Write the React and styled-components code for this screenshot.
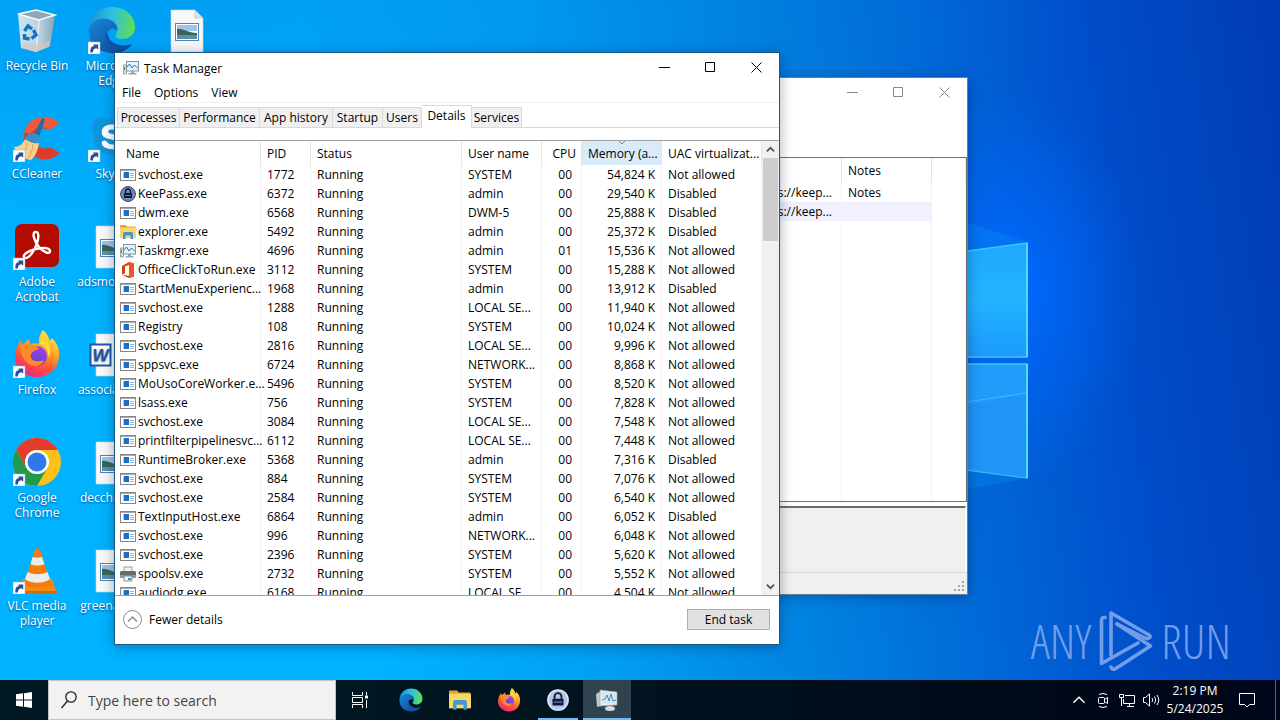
import React from 'react'
import styled, { createGlobalStyle } from 'styled-components'
import { FaSkype } from 'react-icons/fa'

const GlobalStyle = createGlobalStyle`
  * {
    box-sizing: border-box;
  }
  body {
    margin: 0;
    overflow: hidden;
    font-family: "Open Sans", "Noto Sans", sans-serif;
    font-size: 12px;
    line-height: 15px;
    color: #000;
  }
  button, input {
    font: inherit;
    color: inherit;
    border: 0;
    padding: 0;
    background: none;
  }
  svg {
    display: block;
    flex: none;
  }
`

const Screen = styled.div`
  height: 100vh;
  display: flex;
  flex-direction: column;
`

/* ---------- desktop ---------- */

const Desktop = styled.main`
  position: relative;
  flex: 1;
  min-height: 0;
  overflow: hidden;
  background:
    radial-gradient(ellipse 130px 200px at 1010px 290px, #006aff 0%, rgba(0, 102, 250, 0.6) 45%, rgba(0, 90, 230, 0) 100%),
    radial-gradient(ellipse 900px 260px at 200px 0, rgba(0, 130, 225, 0.4) 0%, rgba(0, 130, 225, 0) 100%),
    linear-gradient(83deg, #00b2ff 0%, #00b2ff 28%, #00a0f2 44%, #0082e0 60%, #0064d6 75%, #004eca 85%, #003cb4 100%);
`
const Wallpaper = styled.svg`
  position: absolute;
  left: 830px;
  top: 200px;
`
const IconGrid = styled.div`
  display: grid;
  grid-auto-flow: column;
  grid-template-rows: repeat(6, 108px);
  grid-auto-columns: 74px;
  column-gap: 1px;
`
const Shortcut = styled.a`
  display: flex;
  flex-direction: column;
  align-items: center;
  gap: 4px;
  padding-top: 6px;
  color: #fff;
  text-decoration: none;
  text-align: center;
  text-shadow: 0 1px 2px rgba(0, 30, 80, 0.7);
`
const ShortcutLabel = styled.span`
  max-width: 74px;
  white-space: ${props => props.$single ? 'nowrap' : 'normal'};
`
const Watermark = styled.div`
  position: absolute;
  right: 49px;
  bottom: 8px;
  display: flex;
  align-items: center;
  gap: 7px;
  color: #86aaf0;
  opacity: 0.85;
  font-family: "Open Sans Condensed Light", "Open Sans Condensed", "Roboto Condensed", "Liberation Sans Narrow", Roboto, sans-serif;
  font-size: 48px;
  font-weight: 300;
  line-height: 62px;
`

/* ---------- windows ---------- */

const Window = styled.section`
  position: absolute;
  display: flex;
  flex-direction: column;
  background: #fff;
  border: 1px solid ${props => props.$active ? '#1c5a86' : '#5f7f9c'};
  box-shadow: 0 2px 12px rgba(0, 20, 60, 0.35);
`
const TaskManagerWindow = styled(Window)`
  inset: 52px 500px 35px 114px;
`
const KeePassWindow = styled(Window)`
  inset: 77px 312px 85px 430px;
`
const TitleBar = styled.header`
  flex: none;
  display: flex;
  align-items: center;
  height: 30px;
  padding-left: 8px;
`
const Title = styled.h1`
  margin: 0 0 0 5px;
  flex: 1;
  font-size: 12px;
  font-weight: 400;
`
const WindowButton = styled.button`
  align-self: flex-start;
  width: 46px;
  height: 28px;
  display: grid;
  place-items: center;
  color: ${props => props.$muted ? '#888' : '#000'};
`
const MenuBar = styled.nav`
  flex: none;
  display: flex;
  gap: 13px;
  height: 20px;
  padding-left: 7px;
  border-bottom: 1px solid #f0f0f0;
`
const TabList = styled.div`
  flex: none;
  display: flex;
  align-items: flex-end;
  height: 25px;
  padding-left: 2px;
  border-bottom: 1px solid #d9d9d9;
`
const Tab = styled.button`
  width: ${props => props.$width}px;
  height: ${props => props.$active ? 23 : 20}px;
  margin-bottom: ${props => props.$active ? -1 : 0}px;
  padding-bottom: ${props => props.$active ? 3 : 0}px;
  background: ${props => props.$active ? '#fff' : '#f0f0f0'};
  border: 1px solid #d9d9d9;
  border-bottom: 0;
  & + & {
    border-left: 0;
  }
  white-space: nowrap;
`
const ListArea = styled.div`
  flex: 1;
  min-height: 0;
  display: flex;
  margin-top: 12px;
  border-top: 1px solid #a0a0a0;
  border-bottom: 1px solid #a0a0a0;
`
const TableClip = styled.div`
  flex: 1;
  min-width: 0;
  overflow: hidden;
`
const Table = styled.table`
  width: 100%;
  height: ${props => props.$fill ? '100%' : 'auto'};
  table-layout: fixed;
  border-collapse: separate;
  border-spacing: 0;
`
const Col = styled.col`
  width: ${props => props.$width ? props.$width + 'px' : 'auto'};
`
const Th = styled.th`
  position: relative;
  height: ${props => props.$tall ? 25 : 24}px;
  padding: 0 5px 0 6px;
  font-weight: 400;
  text-align: ${props => props.$align || 'left'};
  white-space: nowrap;
  background: ${props => props.$sorted ? '#d9ebf9' : '#fff'};
  border-right: 1px solid #e5e5e5;
  &:first-child {
    padding-left: 11px;
  }
`
const SortMark = styled.svg`
  position: absolute;
  left: calc(50% - 4px);
  top: 0;
`
const Td = styled.td`
  height: 19px;
  padding: 0 ${props => props.$end || 6}px 0 6px;
  text-align: ${props => props.$align || 'left'};
  white-space: nowrap;
  background: ${props => props.$selected ? '#f0f0ff' : 'transparent'};
  border-right: 1px solid #f2f2f2;
  &:first-child {
    padding-left: 5px;
  }
`
const NameCell = styled.div`
  display: flex;
  align-items: center;
  gap: 2px;
  height: 19px;
`
const ScrollBar = styled.div`
  flex: none;
  width: 17px;
  display: flex;
  flex-direction: column;
  background: #f0f0f0;
`
const ScrollButton = styled.button`
  height: 17px;
  display: grid;
  place-items: center;
`
const ScrollThumb = styled.div`
  height: 83px;
  margin: 0 1px;
  background: #cdcdcd;
`
const ScrollTrack = styled.div`
  flex: 1;
`
const Footer = styled.footer`
  flex: none;
  height: 48px;
  display: flex;
  align-items: center;
  justify-content: space-between;
  padding: 0 9px 2px 8px;
`
const FewerDetails = styled.button`
  display: flex;
  align-items: center;
  gap: 7px;
`
const EndTask = styled.button`
  width: 83px;
  height: 21px;
  background: #e1e1e1;
  border: 1px solid #adadad;
`
const ToolSpace = styled.div`
  flex: none;
  height: 49px;
`
const EntryList = styled.div`
  flex: 1;
  min-height: 0;
  overflow: hidden;
  border: 1px solid #707070;
`
const EntryUrl = styled.span`
  padding-right: 3px;
`
const FillRow = styled.tr`
  height: 100%;
`
const EntryDetails = styled.div`
  flex: none;
  height: 66px;
  margin: 4px 1px 0;
  background: #f0f0f0;
  border-top: 2px solid #6b6b6b;
  border-right: 1px solid #fff;
`
const StatusBar = styled.div`
  flex: none;
  height: 22px;
  display: flex;
  align-items: flex-end;
  justify-content: flex-end;
  padding: 2px;
  background: #f0f0f0;
  border-top: 1px solid #d7d7d7;
`

/* ---------- taskbar ---------- */

const TaskBar = styled.footer`
  position: relative;
  flex: none;
  height: 40px;
  display: flex;
  align-items: stretch;
  background: linear-gradient(90deg, #001a24 0%, #00131f 50%, #000818 85%, #00061a 100%);
  color: #fff;
`
const StartButton = styled.button`
  width: 48px;
  display: grid;
  place-items: center;
`
const SearchBox = styled.label`
  width: 288px;
  display: flex;
  align-items: center;
  gap: 11px;
  padding-left: 12px;
  background: #f2f2f2;
  border: 1px solid #bfc4c6;
  color: #222;
`
const SearchInput = styled.input`
  flex: 1;
  min-width: 0;
  padding-top: 2px;
  font-size: 14px;
  line-height: 20px;
  outline: 0;
  &::placeholder {
    color: #444;
    opacity: 1;
  }
`
const TaskButtons = styled.div`
  display: flex;
  gap: 1px;
`
const TaskButton = styled.button`
  width: 48px;
  display: grid;
  place-items: center;
  &:first-child {
    margin-right: 2px;
  }
  background: ${props => props.$active ? '#2f434e' : 'transparent'};
  background-image: ${props => props.$running ? 'linear-gradient(#76b9ed, #76b9ed)' : 'none'};
  background-repeat: no-repeat;
  background-position: bottom center;
  background-size: ${props => props.$active ? '100%' : '40px'} 2px;
`
const Tray = styled.div`
  margin-left: auto;
  display: flex;
  align-items: center;
`
const TrayButton = styled.button`
  width: 24px;
  height: 40px;
  display: grid;
  place-items: center;
`
const Clock = styled.time`
  width: 64px;
  text-align: center;
  line-height: 18px;
`
const NoticeButton = styled(TrayButton)`
  width: 40px;
`
const ShowDesktop = styled.button`
  width: 5px;
  height: 40px;
  margin-left: 8px;
  border-left: 1px solid #5b6570;
`

/* ---------- drawings ---------- */

const LinkArrow = () => (
  <g>
    <rect x="0" y="36" width="12" height="12" fill="#fff" stroke="#9fb4c8" strokeWidth=".5" />
    <path d="M2.500 46.500c-.6-4 1-6.200 3.600-6.400L5 38.400h5.200v5.400l-1.600-1.500C6.500 42.500 5 43.500 4.800 46.500z" fill="#2b4f92" />
  </g>
)

const Recycle = () => (
  <svg width="48" height="48" viewBox="0 0 48 48">
    <defs>
      <linearGradient id="bin" x1="0" x2="1">
        <stop offset="0" stopColor="#dfeaf1" />
        <stop offset=".6" stopColor="#c9d5dd" />
        <stop offset="1" stopColor="#93a3af" />
      </linearGradient>
    </defs>
    <path d="M5 8l18-4 19 5-5 31-14 6-15-4z" fill="url(#bin)" opacity=".92" />
    <path d="M5 8l18-4 19 5-16 5z" fill="#8fa9b8" stroke="#f4fafd" strokeWidth="1.500" />
    <path d="M26 14l-3 32" stroke="#f6fafc" strokeWidth="1" />
    <path d="M9 36l14 3 14-4-1 6-13 5-14-4z" fill="#d6c8bd" opacity=".7" />
    <g fill="none" stroke="#1474c4" strokeWidth="3.400">
      <path d="M11.500 25l3.500-5 4 3" />
      <path d="M20.500 24l2.500 5-4.500 3.500" />
      <path d="M16.500 33l-5-1v-4" />
    </g>
  </svg>
)

const EdgeIcon = ({ size = 48, link, id }) => (
  <svg width={size} height={size} viewBox="0 0 48 48">
    <defs>
      <linearGradient id={id + 'a'} x1="0" x2="1" y1=".4" y2=".5">
        <stop offset="0" stopColor="#1595dd" />
        <stop offset=".5" stopColor="#2fc2df" />
        <stop offset="1" stopColor="#62dc50" />
      </linearGradient>
      <linearGradient id={id + 'b'} x1="0" x2="1" y1="0" y2="1">
        <stop offset="0" stopColor="#1b86da" />
        <stop offset="1" stopColor="#0d418d" />
      </linearGradient>
    </defs>
    <path d="M1 23C2 9 12 1 24 1c14 0 23 10 23 20 0 8-6 12-13 12-5 0-8-2-6-5 3-4 2-11-5-14C14 11 4 15 1 23z" fill={'url(#' + id + 'a)'} />
    <path d="M1 23c2-8 10-12 19-10 6 2 10 7 9 12-1-2-4-3-6-2-8 3-5 13 3 16 7 3 14 2 18-1-5 7-13 10-21 9C9 46 0 36 1 23z" fill={'url(#' + id + 'b)'} />
    <path d="M19 24c-4 8 0 17 10 19 6 1 11-1 15-5-6 2-13 2-18-1-5-3-7-8-7-13z" fill="#0f54a5" />
    {link && <LinkArrow />}
  </svg>
)

const CCleaner = () => (
  <svg width="48" height="48" viewBox="0 0 48 48">
    <path d="M46 9A21 21 0 1 0 47 39l-10-6a10 10 0 1 1 0-17z" fill="#de3c2b" />
    <path d="M46 9A21 21 0 0 0 11 18l6 2c6-8 13-9 20-4z" fill="#f05a3c" />
    <path d="M29 4l3 1-7 21-6-2z" fill="#1f6ea8" />
    <path d="M13 23c3-5 8-5 14-1l-2 8-13-3z" fill="#3490cc" />
    <path d="M12 25c4 3 9 5 14 4-1 7-4 14-8 17C10 45 3 40 1 33c5 0 9-3 11-8z" fill="#f7cf8e" />
    <path d="M14 29c0 5-3 9-6 12m12-11c0 5-2 10-5 14" stroke="#d9a460" fill="none" />
    <LinkArrow />
  </svg>
)

const Acrobat = () => (
  <svg width="48" height="48" viewBox="0 0 48 48">
    <rect x="2" y="2" width="44" height="43" rx="7" fill="#b30b00" />
    <path d="M22 10c4-1 4 5 2 11-2 7-8 16-12 15-4-2 2-7 11-9 8-2 14-1 14 2 0 4-7 1-11-4-5-6-7-14-4-15z" fill="none" stroke="#fff" strokeWidth="2.400" strokeLinejoin="round" />
    <LinkArrow />
  </svg>
)

const Firefox = ({ size = 48, link, id }) => (
  <svg width={size} height={size} viewBox="0 0 48 48">
    <defs>
      <linearGradient id={id + 'f'} x1=".8" x2=".3" y1="0" y2="1">
        <stop offset="0" stopColor="#fff14f" />
        <stop offset=".35" stopColor="#ffae26" />
        <stop offset=".65" stopColor="#ff5a35" />
        <stop offset="1" stopColor="#f02278" />
      </linearGradient>
      <linearGradient id={id + 'p'} x1=".7" x2=".3" y1="0" y2="1">
        <stop offset="0" stopColor="#a542e8" />
        <stop offset="1" stopColor="#5444cc" />
      </linearGradient>
    </defs>
    <path d="M30 0c4 4 6 7 7 11l2-3c5 5 8 11 7 19-1 12-10 20-22 20S2 38 2 27c0-7 3-13 6-17l1 5 7-6c0 2 1 4 2 5 3-1 6-1 8 0-1-5 1-10 4-14z" fill={'url(#' + id + 'f)'} />
    <circle cx="24" cy="26" r="10" fill={'url(#' + id + 'p)'} />
    <path d="M7 15c3-2 7-2 11 0 3 0 6 1 8 4-3 1-6 2-8 5-1 4 1 6 4 7 4 1 6-1 9 0-3 5-10 7-15 3C10 30 7 23 7 15z" fill="#ff8a28" />
    <path d="M27 14c6 2 9 7 8 14 3-4 3-10 0-14-2-2-4-4-5-7-2 2-3 4-3 7z" fill="#ffdb3a" />
    {link && <LinkArrow />}
  </svg>
)

const Chrome = () => (
  <svg width="48" height="48" viewBox="0 0 48 48">
    <circle cx="24" cy="24" r="24" fill="#fbc116" />
    <path d="M3.200 12A24 24 0 0 1 44.800 12H24a12 12 0 0 0-10.400 18z" fill="#e33b2e" />
    <path d="M3.200 12A24 24 0 0 0 24 48l10.400-18a12 12 0 0 1-20.800 0z" fill="#229a4b" />
    <circle cx="24" cy="24" r="12" fill="#fff" />
    <circle cx="24" cy="24" r="9.500" fill="#2f78ea" />
    <LinkArrow />
  </svg>
)

const Vlc = () => (
  <svg width="48" height="48" viewBox="0 0 48 48">
    <path d="M10 33h29l5 14H5z" fill="#f48a12" />
    <path d="M5 45h39v2H5z" fill="#d56a05" />
    <path d="M22 4c1-2 4-2 5 0l11 34c-4 5-23 5-27 0z" fill="#f57c0c" />
    <path d="M19.500 11c3 1 6 1 9.500 0l2.500 7c-4 2-10 2-14 0z" fill="#ececec" />
    <path d="M14.500 26c6 3 14 3 20 0l2.500 7c-6 5-19 5-25 0z" fill="#ececec" />
    <LinkArrow />
  </svg>
)

const Skype = () => (
  <svg width="48" height="48" viewBox="0 0 48 48">
    <circle cx="24" cy="23" r="15" fill="#fff" />
    <FaSkype x="1" y="0" size={46} color="#1294dc" />
    <LinkArrow />
  </svg>
)

const FileIcon = ({ word }) => (
  <svg width="48" height="48" viewBox="0 0 48 48">
    <path d="M8 4h24l8 8v34H8z" fill="#f8f8f8" stroke="#c9d3da" strokeWidth=".6" />
    <path d="M32 4v8h8z" fill="#dde3e7" stroke="#b3bec6" strokeWidth=".6" />
    {word ? (
      <g>
        <rect x="2.500" y="14.500" width="20" height="21" fill="#fff" stroke="#1c57a8" strokeWidth="2" />
        <text x="12.500" y="31" textAnchor="middle" fontFamily="Liberation Sans, sans-serif" fontSize="17" fontWeight="700" fontStyle="italic" fill="#1c57a8">W</text>
      </g>
    ) : (
      <g>
        <rect x="12.500" y="17.500" width="23" height="17" fill="#fff" stroke="#4a86b8" />
        <path d="M14 19h20v6H14z" fill="#9cc4e6" />
        <path d="M14 23c6-1 10 4 20 4v3H14z" fill="#3b6559" />
        <path d="M14 29h20v4H14z" fill="#5f8da8" />
      </g>
    )}
  </svg>
)

const ExeIcon = () => (
  <svg width="16" height="16" viewBox="0 0 16 16">
    <rect x=".5" y="2.500" width="15" height="11" fill="#fff" stroke="#868686" />
    <path d="M1 3h14v1H1z" fill="#a9a9a9" />
    <rect x="4" y="5" width="5" height="6" fill="#1b6ec2" />
    <path d="M3 5h1v6H3z" fill="#a8d0ee" />
    <path d="M10 6.500h4M10 8.500h4M10 10.500h4" stroke="#8db9dc" />
  </svg>
)

const KeePassIcon = ({ size = 16, light }) => (
  <svg width={size} height={size} viewBox="0 0 16 16">
    <circle cx="8" cy="8" r="7.400" fill={light ? '#b7c5ee' : '#7188bd'} stroke={light ? '#e6ebfa' : '#33415f'} strokeWidth="1" />
    <path d="M5.500 7V5.500a2.500 2.500 0 0 1 5 0V7" fill="none" stroke="#111b38" strokeWidth="1.400" />
    <rect x="4" y="7" width="8" height="5" rx=".5" fill="#111b38" />
    <path d="M5 9.500h6" stroke="#8b9bc8" strokeWidth=".7" />
  </svg>
)

const FolderIcon = ({ size = 16 }) => (
  <svg width={size} height={size} viewBox="0 0 16 16">
    <path d="M0 1h6l1 1.500h8.500V14H0z" fill="#e5a72a" />
    <path d="M0 3.500h16V14H0z" fill="#fcd765" />
    <path d="M3 15V9.500Q3 8 4.500 8h7Q13 8 13 9.500V15h-2.500v-3.500h-5V15z" fill="#3f97d3" />
  </svg>
)

const TaskmgrIcon = ({ size = 16 }) => (
  <svg width={size} height={size} viewBox="0 0 16 16">
    <rect x=".5" y="5" width="3" height="9" fill="#d5d9d9" stroke="#83918d" strokeWidth=".7" />
    <path d="M1.500 7v3" stroke="#3f9a3a" />
    <rect x="3.500" y="1.500" width="12" height="9.500" fill="#e6f3fc" stroke="#8195a3" />
    <path d="M4 7l2.500-3 2.500 4 2.500-3L15 8.500" fill="none" stroke="#1c77ae" />
    <path d="M8 11h3v2h2.500v1.500h-8V13H8z" fill="#9aa5ac" />
  </svg>
)

const TaskmgrBarIcon = () => (
  <svg width="24" height="24" viewBox="0 0 24 24">
    <path d="M1 6l5-3v15l-4 1z" fill="#c3c9cc" />
    <path d="M5 2l17 2v13L5 18z" fill="#e9edef" stroke="#97a2a8" strokeWidth=".7" />
    <path d="M7 4l14 1.500V15L7 16z" fill="#d4e6f2" />
    <path d="M7 12l3-1 2-4 2 6 2-7 2 7 3-1" fill="none" stroke="#4b8db5" />
    <ellipse cx="15" cy="20.500" rx="5" ry="2.500" fill="#d6dadd" />
  </svg>
)

const OfficeIcon = () => (
  <svg width="16" height="16" viewBox="0 0 16 16">
    <path d="M2 4l7-4 5 1.500v13L9 16l-7-3 7 .800V3L5 4.200v7L2 12.800z" fill="#dc3b10" />
    <path d="M9 0l5 1.500v13L9 16z" fill="#ef5424" />
  </svg>
)

const PrinterIcon = () => (
  <svg width="16" height="16" viewBox="0 0 16 16">
    <path d="M4 1h8v5H4z" fill="#f4f4f4" stroke="#868686" strokeWidth=".8" />
    <path d="M1 5h14l1 1v5H0V6z" fill="#686c6e" />
    <path d="M0 9h16v3H0z" fill="#94989a" />
    <path d="M4 10h8v5H4z" fill="#f3f8fa" stroke="#777" strokeWidth=".8" />
    <path d="M8 12h3v2H8z" fill="#2795a5" />
  </svg>
)

const Minimize = () => <svg width="11" height="11" viewBox="0 0 11 11"><path d="M0 5.500h11" stroke="currentColor" /></svg>
const Maximize = () => <svg width="11" height="11" viewBox="0 0 11 11"><path d="M.5.5h9v9h-9z" fill="none" stroke="currentColor" /></svg>
const Close = () => <svg width="11" height="11" viewBox="0 0 11 11"><path d="M.5.5l10 10M10.500.5l-10 10" stroke="currentColor" /></svg>

const Chevron = ({ down, size = 9, width = 2, color = '#505050' }) => (
  <svg width={size} height={size} viewBox="0 0 10 10">
    <path d={down ? 'M1 3l4 4 4-4' : 'M1 7l4-4 4 4'} fill="none" stroke={color} strokeWidth={width} />
  </svg>
)

const AnyRunMark = () => (
  <svg width="56" height="62" viewBox="0 0 56 62" fill="none" stroke="currentColor" strokeWidth="3.600" strokeLinejoin="round" strokeLinecap="round">
    <path d="M7 7.500Q3.500 7 3.500 11v42.500L40 33" />
    <path d="M13 45V3l38 22q3 2-1 3.500h-2L19 14" />
    <path d="M19 14l33.500 22L17 59q-3 1-4-2" />
  </svg>
)

const icons = {
  exe: <ExeIcon />,
  keepass: <KeePassIcon />,
  folder: <FolderIcon />,
  taskmgr: <TaskmgrIcon />,
  office: <OfficeIcon />,
  printer: <PrinterIcon />,
}

/* ---------- data ---------- */

const shortcuts = [
  { label: 'Recycle Bin', icon: <Recycle /> },
  { label: 'CCleaner', icon: <CCleaner /> },
  { label: 'Adobe Acrobat', icon: <Acrobat /> },
  { label: 'Firefox', icon: <Firefox link id="ffd" /> },
  { label: 'Google Chrome', icon: <Chrome /> },
  { label: 'VLC media player', icon: <Vlc /> },
  { label: 'Microsoft Edge', icon: <EdgeIcon link id="edd" /> },
  { label: 'Skype', icon: <Skype /> },
  { label: 'adsmore.jpg', icon: <FileIcon />, single: true },
  { label: 'associate.rtf', icon: <FileIcon word />, single: true },
  { label: 'deccha.png', icon: <FileIcon />, single: true },
  { label: 'greena.png', icon: <FileIcon />, single: true },
  { label: '', name: 'Picture', icon: <FileIcon />, single: true },
]

const tabs = [
  ['Processes', 63],
  ['Performance', 80],
  ['App history', 73],
  ['Startup', 50],
  ['Users', 39],
  ['Details', 50],
  ['Services', 50],
]

const columns = [
  { title: 'Name', width: 146 },
  { title: 'PID', width: 50 },
  { title: 'Status' },
  { title: 'User name', width: 80 },
  { title: 'CPU', width: 40, align: 'right' },
  { title: 'Memory (a...', width: 80, align: 'right', sorted: true },
  { title: 'UAC virtualizat...', width: 100 },
]

const processes = [
  ['exe', 'svchost.exe', '1772', 'SYSTEM', '00', '54,824 K', 'Not allowed'],
  ['keepass', 'KeePass.exe', '6372', 'admin', '00', '29,540 K', 'Disabled'],
  ['exe', 'dwm.exe', '6568', 'DWM-5', '00', '25,888 K', 'Disabled'],
  ['folder', 'explorer.exe', '5492', 'admin', '00', '25,372 K', 'Disabled'],
  ['taskmgr', 'Taskmgr.exe', '4696', 'admin', '01', '15,536 K', 'Not allowed'],
  ['office', 'OfficeClickToRun.exe', '3112', 'SYSTEM', '00', '15,288 K', 'Not allowed'],
  ['exe', 'StartMenuExperienc...', '1968', 'admin', '00', '13,912 K', 'Disabled'],
  ['exe', 'svchost.exe', '1288', 'LOCAL SE...', '00', '11,940 K', 'Not allowed'],
  ['exe', 'Registry', '108', 'SYSTEM', '00', '10,024 K', 'Not allowed'],
  ['exe', 'svchost.exe', '2816', 'LOCAL SE...', '00', '9,996 K', 'Not allowed'],
  ['exe', 'sppsvc.exe', '6724', 'NETWORK...', '00', '8,868 K', 'Not allowed'],
  ['exe', 'MoUsoCoreWorker.e...', '5496', 'SYSTEM', '00', '8,520 K', 'Not allowed'],
  ['exe', 'lsass.exe', '756', 'SYSTEM', '00', '7,828 K', 'Not allowed'],
  ['exe', 'svchost.exe', '3084', 'LOCAL SE...', '00', '7,548 K', 'Not allowed'],
  ['exe', 'printfilterpipelinesvc...', '6112', 'LOCAL SE...', '00', '7,448 K', 'Not allowed'],
  ['exe', 'RuntimeBroker.exe', '5368', 'admin', '00', '7,316 K', 'Disabled'],
  ['exe', 'svchost.exe', '884', 'SYSTEM', '00', '7,076 K', 'Not allowed'],
  ['exe', 'svchost.exe', '2584', 'SYSTEM', '00', '6,540 K', 'Not allowed'],
  ['exe', 'TextInputHost.exe', '6864', 'admin', '00', '6,052 K', 'Disabled'],
  ['exe', 'svchost.exe', '996', 'NETWORK...', '00', '6,048 K', 'Not allowed'],
  ['exe', 'svchost.exe', '2396', 'SYSTEM', '00', '5,620 K', 'Not allowed'],
  ['printer', 'spoolsv.exe', '2732', 'SYSTEM', '00', '5,552 K', 'Not allowed'],
  ['exe', 'audiodg.exe', '6168', 'LOCAL SE...', '00', '4,504 K', 'Not allowed'],
]

const WindowButtons = ({ muted }) => (
  <>
    <WindowButton $muted={muted} aria-label="Minimize"><Minimize /></WindowButton>
    <WindowButton $muted={muted} aria-label="Maximize"><Maximize /></WindowButton>
    <WindowButton $muted={muted} aria-label="Close"><Close /></WindowButton>
  </>
)

const KeePass = () => (
  <KeePassWindow aria-label="KeePass">
    <TitleBar>
      <Title />
      <WindowButtons muted />
    </TitleBar>
    <ToolSpace />
    <EntryList>
      <Table $fill>
        <colgroup>
          <Col />
          <Col $width={90} />
          <Col $width={34} />
        </colgroup>
        <thead>
          <tr>
            <Th $tall />
            <Th $tall>Notes</Th>
            <Th $tall />
          </tr>
        </thead>
        <tbody>
          <tr>
            <Td $align="right"><EntryUrl>https://keep...</EntryUrl></Td>
            <Td>Notes</Td>
            <Td />
          </tr>
          <tr>
            <Td $align="right" $selected><EntryUrl>https://keep...</EntryUrl></Td>
            <Td $selected />
            <Td />
          </tr>
          <FillRow>
            <Td />
            <Td />
            <Td />
          </FillRow>
        </tbody>
      </Table>
    </EntryList>
    <EntryDetails />
    <StatusBar>
      <svg width="12" height="12" viewBox="0 0 12 12" fill="#a5a5a5">
        <path d="M9 1h2v2H9zM9 5h2v2H9zM9 9h2v2H9zM5 5h2v2H5zM5 9h2v2H5zM1 9h2v2H1z" />
      </svg>
    </StatusBar>
  </KeePassWindow>
)

const TaskManager = () => (
  <TaskManagerWindow $active aria-label="Task Manager">
    <TitleBar>
      <TaskmgrIcon />
      <Title>Task Manager</Title>
      <WindowButtons />
    </TitleBar>
    <MenuBar>
      <button>File</button>
      <button>Options</button>
      <button>View</button>
    </MenuBar>
    <TabList role="tablist">
      {tabs.map(([name, width]) => (
        <Tab key={name} role="tab" $width={width} $active={name === 'Details'}>{name}</Tab>
      ))}
    </TabList>
    <ListArea>
      <TableClip>
        <Table>
          <colgroup>
            {columns.map(c => <Col key={c.title} $width={c.width} />)}
          </colgroup>
          <thead>
            <tr>
              {columns.map(c => (
                <Th key={c.title} $align={c.align} $sorted={c.sorted}>
                  {c.title}
                  {c.sorted && (
                    <SortMark width="8" height="5" viewBox="0 0 8 5">
                      <path d="M1 0l3 3 3-3" fill="none" stroke="#888" />
                    </SortMark>
                  )}
                </Th>
              ))}
            </tr>
          </thead>
          <tbody>
            {processes.map(([icon, name, pid, user, cpu, memory, uac]) => (
              <tr key={pid}>
                <Td><NameCell>{icons[icon]}{name}</NameCell></Td>
                <Td>{pid}</Td>
                <Td>Running</Td>
                <Td>{user}</Td>
                <Td $align="right" $end={9}>{cpu}</Td>
                <Td $align="right">{memory}</Td>
                <Td>{uac}</Td>
              </tr>
            ))}
          </tbody>
        </Table>
      </TableClip>
      <ScrollBar>
        <ScrollButton aria-label="Scroll up"><Chevron /></ScrollButton>
        <ScrollThumb />
        <ScrollTrack />
        <ScrollButton aria-label="Scroll down"><Chevron down /></ScrollButton>
      </ScrollBar>
    </ListArea>
    <Footer>
      <FewerDetails>
        <svg width="19" height="19" viewBox="0 0 19 19" fill="none" stroke="#8c8c8c">
          <circle cx="9.500" cy="9.500" r="9" />
          <path d="M5 11.500L9.500 7l4.500 4.500" strokeWidth="1.500" />
        </svg>
        Fewer details
      </FewerDetails>
      <EndTask>End task</EndTask>
    </Footer>
  </TaskManagerWindow>
)

const App = () => {
  return (
    <Screen>
      <GlobalStyle />
      <Desktop>
        <Wallpaper width="200" height="290" viewBox="0 0 200 290">
          <defs>
            <linearGradient id="pane" x1="0" x2="0" y1="0" y2="1">
              <stop offset="0" stopColor="#1fa8ff" />
              <stop offset=".5" stopColor="#22b4ff" />
              <stop offset="1" stopColor="#1c98fb" />
            </linearGradient>
          </defs>
          <path d="M130 20l68 22v116H130zM130 260l68 18-68 12z" fill="#0a8cf2" opacity=".35" />
          <path d="M100 56l97-13v114H100z" fill="url(#pane)" stroke="#3cc6ff" strokeWidth="1.500" />
          <path d="M100 164h97v114l-97-13z" fill="#229cfb" stroke="#3cc6ff" strokeWidth="1.500" />
          <path d="M100 228V214l97-21v85l-97-13z" fill="#1f8ff5" opacity=".6" />
          <path d="M130 203l67-10" stroke="#3cbcff" />
          <path d="M197 43v114M197 164v114" stroke="#4fdcff" strokeWidth="2" />
        </Wallpaper>
        <IconGrid>
          {shortcuts.map(s => (
            <Shortcut key={s.label} href="#" aria-label={s.name}>
              {s.icon}
              <ShortcutLabel $single={s.single}>{s.label}</ShortcutLabel>
            </Shortcut>
          ))}
        </IconGrid>
        <Watermark>
          <span>ANY</span>
          <AnyRunMark />
          <span>RUN</span>
        </Watermark>
        <KeePass />
        <TaskManager />
      </Desktop>
      <TaskBar>
        <StartButton aria-label="Start">
          <svg width="16" height="16" viewBox="0 0 16 16" fill="#fff">
            <path d="M0 2.300l7-1V7.500H0zM8 1.200L16 0v7.500H8zM0 8.500h7v6.200l-7-1zM8 8.500h8V16l-8-1.200z" />
          </svg>
        </StartButton>
        <SearchBox>
          <svg width="16" height="18" viewBox="0 0 16 18" fill="none" stroke="#222" strokeWidth="1.300">
            <circle cx="10" cy="6" r="5.200" />
            <path d="M6.500 10L.5 17" />
          </svg>
          <SearchInput type="text" placeholder="Type here to search" aria-label="Search" />
        </SearchBox>
        <TaskButtons>
          <TaskButton aria-label="Task View">
            <svg width="16" height="16" viewBox="0 0 16 16" fill="none" stroke="#fff">
              <path d="M.5 0v3.500h10V0M.5 16v-3.500h10V16M.5 5.500h10v5H.5zM14.500 0v3M14.500 8v8" />
              <path d="M13 3.500h3v3h-3z" fill="#fff" stroke="none" />
            </svg>
          </TaskButton>
          <TaskButton aria-label="Microsoft Edge"><EdgeIcon size={24} id="edt" /></TaskButton>
          <TaskButton aria-label="File Explorer"><FolderIcon size={22} /></TaskButton>
          <TaskButton aria-label="Firefox"><Firefox size={24} id="fft" /></TaskButton>
          <TaskButton aria-label="KeePass" $running><KeePassIcon size={22} light /></TaskButton>
          <TaskButton aria-label="Task Manager" $running $active><TaskmgrBarIcon /></TaskButton>
        </TaskButtons>
        <Tray>
          <TrayButton aria-label="Hidden icons"><Chevron size={14} width={1} color="#fff" /></TrayButton>
          <TrayButton aria-label="Meet Now">
            <svg width="16" height="16" viewBox="0 0 16 16" fill="none" stroke="#fff">
              <rect x="3.500" y="5.500" width="6" height="6" rx="1" />
              <path d="M9.500 7.500l3-2v6l-3-2M4 2.500Q8 .5 12 2.500M4 14.500q4 2 8 0" />
            </svg>
          </TrayButton>
          <TrayButton aria-label="Network">
            <svg width="16" height="16" viewBox="0 0 16 16" fill="none" stroke="#fff">
              <path d="M6 3.500h9.500v8h-11V7M8 14.500h7M10.500 12v2M.5 2.500h4v3h-4zM2.500 6v8" />
            </svg>
          </TrayButton>
          <TrayButton aria-label="Volume">
            <svg width="17" height="16" viewBox="0 0 17 16" fill="none" stroke="#fff">
              <path d="M.5 5.500h2l4-3.500v12l-4-3.500h-2zM9 6q1.500 2 0 4M11.500 4.500q2.500 3.500 0 7M14 3q3.500 5 0 10" />
            </svg>
          </TrayButton>
          <Clock>2:19 PM<br />5/24/2025</Clock>
          <NoticeButton aria-label="Notifications">
            <svg width="16" height="16" viewBox="0 0 16 16" fill="none" stroke="#fff">
              <path d="M.5 1.500h15v11h-5L8 15l-2.500-2.500h-5z" />
            </svg>
          </NoticeButton>
          <ShowDesktop aria-label="Show desktop" />
        </Tray>
      </TaskBar>
    </Screen>
  )
}

export default App
